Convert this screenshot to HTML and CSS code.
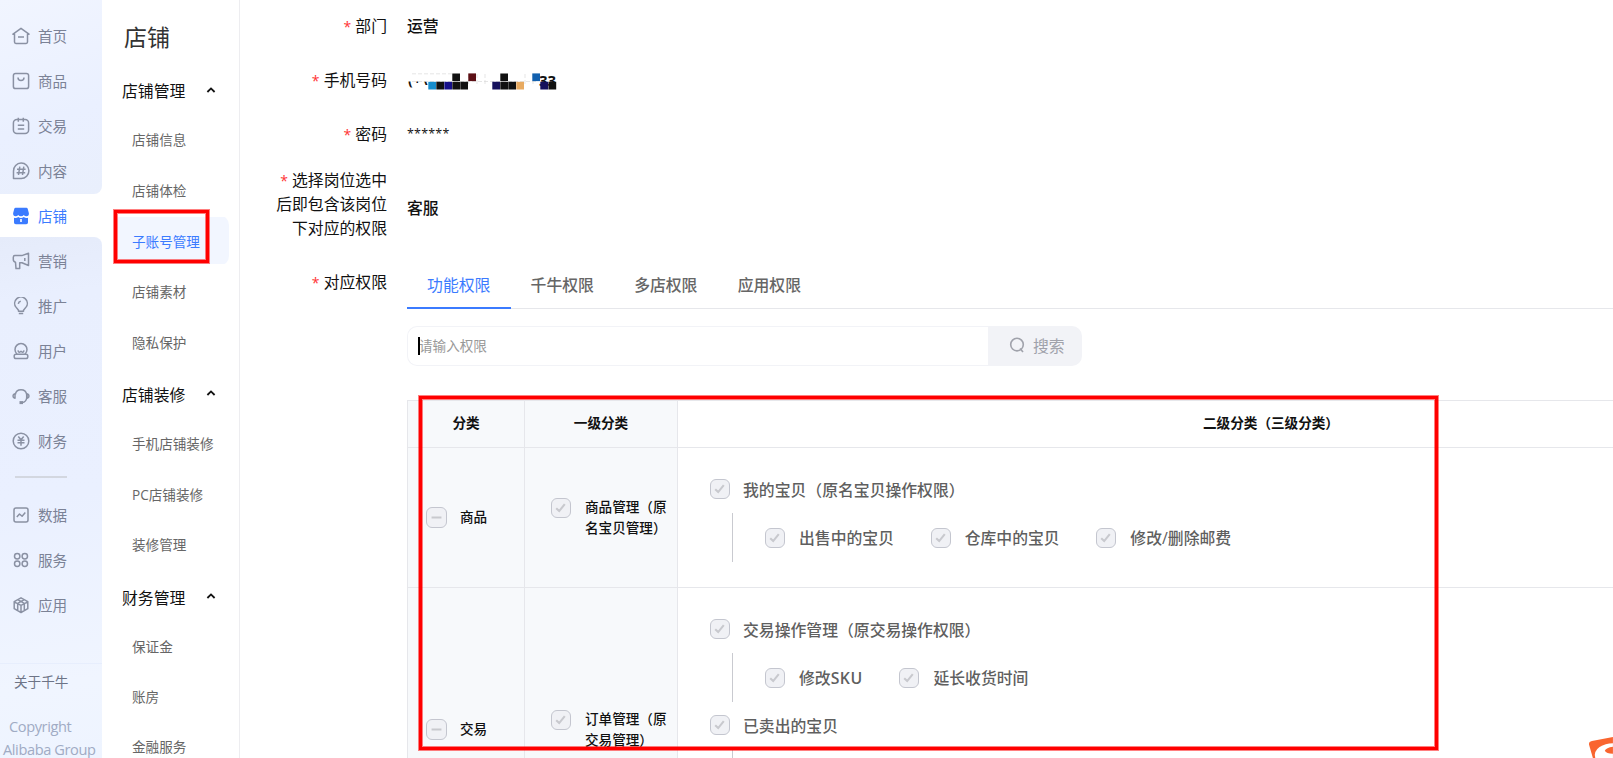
FILE: index.html
```html
<!DOCTYPE html>
<html lang="zh-CN">
<head>
<meta charset="utf-8">
<title>店铺 - 子账号管理</title>
<link rel="stylesheet" href="styles.css">
</head>
<body>
<svg width="0" height="0" class="defs">
  <symbol id="check" viewBox="0 0 20 20"><path d="M4.700 10.200 8 13.400 14.200 5.800" fill="none" stroke="#c8c9ce" stroke-width="2.300"/></symbol>
  <symbol id="minus" viewBox="0 0 20 20"><path d="M4.8 10h10.4" fill="none" stroke="#c8c9ce" stroke-width="2"/></symbol>
  <symbol id="up" viewBox="0 0 10 8"><path d="M1.4 6 5 2.4 8.6 6" fill="none" stroke="#111" stroke-width="1.8"/></symbol>
</svg>
<div class="app">
  <nav class="rail">
    <div class="rail-top">
      <a class="nav"><svg viewBox="0 0 18 18"><path d="M9 1.3 1 7.200h1.500V15q0 1.400 1.400 1.400h10.200q1.400 0 1.400-1.400V7.200H17zM6 10h6"/></svg>首页</a>
      <a class="nav"><svg viewBox="0 0 18 18"><rect x="1.4" y="1.4" width="15.2" height="15.2" rx="2.2"/><path d="M6 5.6q0 3 3 3t3-3"/></svg>商品</a>
      <a class="nav"><svg viewBox="0 0 18 18"><rect x="1.4" y="2.6" width="15.2" height="14" rx="3.5"/><path d="M6.3.8v4M11.3.8v4M5.8 8.2h6.4M5.8 12h6.4"/></svg>交易</a>
      <a class="nav"><svg viewBox="0 0 18 18"><path d="M1.5 16.5V9a7.7 7.7 0 1 1 7.7 7.5zM7.8 4.7 6.5 13M11.8 4.7 10.5 13M5 7.3h8.6M4.6 10.8h8.6"/></svg>内容</a>
    </div>
    <a class="nav on"><svg viewBox="0 0 18 18"><path d="M3.6.7h10.8q1 0 1.3 1l1.2 4.6q.2 3-2.4 3-1.800 0-2.700-1.400Q10.800 9.300 9 9.300T6.200 7.900Q5.300 9.300 3.500 9.300 1 9.300 1.100 6.300L2.300 1.700Q2.600.7 3.600.7zM2 10.700q2.500.7 4.200-.7 2.800 2 5.600 0 1.700 1.400 4.200.7V15.500Q16 17.300 14.200 17.300H3.800Q2 17.300 2 15.500zM8.200 12.100v2.800h1.600v-2.800z"/></svg>店铺</a>
    <div class="rail-bottom">
      <a class="nav"><svg viewBox="0 0 18 18"><path d="M1.300 5.300Q1.300 3.600 3 3.600H9.800L16.500 1.300V13.500L10 10.800H7.700V16.600H4L3.500 10.200Q1.300 9.700 1.300 7.600zM12.800 6v3"/></svg>营销</a>
      <a class="nav"><svg viewBox="0 0 18 18"><path d="M6.500 14.200V13.200L3.800 9.900A6.300 6.300 0 1 1 14.200 9.900L11.500 13.200V14.200zM6.800 16.400h4.400M6.300 6.800q.3-2.300 2.500-2.600"/></svg>推广</a>
      <a class="nav"><svg viewBox="0 0 18 18"><path d="M5 12a6 6 0 1 1 8 0M6 8.400Q6.200 10.300 7.700 10.300L9 9.200 10.300 10.300Q11.800 10.300 12 8.400"/><rect x="2.200" y="12.200" width="13.600" height="4.400" rx="1.800"/></svg>用户</a>
      <a class="nav"><svg viewBox="0 0 18 18"><path d="M3.300 7.500a5.800 5.800 0 0 1 11.400 0v3.500q-.6 4-4.500 4.600"/><path d="M3 6.700q-2 .3-2 2.200T3 11.200zM15 6.700q2 .3 2 2.200t-2 2.300z"/><path d="M7.500 15.600h3.500" stroke-width="3"/></svg>客服</a>
      <a class="nav"><svg viewBox="0 0 18 18"><circle cx="9" cy="9" r="7.800"/><path d="M6.300 4.600 9 7.800l2.700-3.200M5.500 8.200h7M5.500 10.700h7M9 7.800V13.800"/></svg>财务</a>
      <hr class="rule">
      <a class="nav"><svg viewBox="0 0 18 18"><rect x="2" y="2" width="14" height="14" rx="2"/><path d="m4.800 11 2.700-3 2.600 2.200 3.200-3.600"/></svg>数据</a>
      <a class="nav"><svg viewBox="0 0 18 18"><circle cx="5.200" cy="5.200" r="2.700"/><circle cx="12.800" cy="5.200" r="2.700"/><circle cx="5.200" cy="12.800" r="2.700"/><circle cx="12.800" cy="12.800" r="2.700"/></svg>服务</a>
      <a class="nav"><svg viewBox="0 0 18 18"><path d="M9 1.800 15.800 5.600V12.700L9 16.500 2.200 12.700V5.600zM2.200 5.800 9 9.300l6.800-3.500M9 9.300v7.200M5.700 3.700 12.300 7.400V14.500M12.300 3.700 5.700 7.400V14.500"/></svg>应用</a>
      <div class="about">
        <span class="about-link">关于千牛</span>
        <span class="copy c1">Copyright</span>
        <span class="copy c2">Alibaba Group</span>
      </div>
    </div>
  </nav>

  <aside class="sub">
    <h1 class="sub-title">店铺</h1>
    <h2 class="group">店铺管理<svg><use href="#up"/></svg></h2>
    <a class="item">店铺信息</a>
    <a class="item">店铺体检</a>
    <a class="item sel">子账号管理</a>
    <a class="item">店铺素材</a>
    <a class="item">隐私保护</a>
    <h2 class="group">店铺装修<svg><use href="#up"/></svg></h2>
    <a class="item">手机店铺装修</a>
    <a class="item">PC店铺装修</a>
    <a class="item">装修管理</a>
    <h2 class="group">财务管理<svg><use href="#up"/></svg></h2>
    <a class="item">保证金</a>
    <a class="item">账房</a>
    <a class="item last">金融服务</a>
  </aside>

  <main class="main">
    <div class="field f1"><label class="label"><i>*</i> 部门</label><b class="value">运营</b></div>
    <div class="field f2"><label class="label"><i>*</i> 手机号码</label>
      <div class="value phone">
        <span class="ph-a">(+\</span><span class="ph-b">33</span>
        <svg class="mosaic" width="150" height="18" viewBox="0 0 150 18">
          <path d="M0 0h21v8.500H0z" fill="#fff"/>
          <path d="M5 8.500H130M5 .8H45M61.500 1V13M70 1v12M78 1v12M94.500 1v12M118 1v12M126 1v12" stroke="#d4d4d4" stroke-width=".6" stroke-dasharray="4 2" fill="none"/>
          <path d="M45.300 .4h7.700v7.700h-7.700zM93.300.4h7.700v7.700h-7.700zM29.300 8.800H37v7.700h-7.700zM45.300 8.800H53v7.700h-7.700zM53.300 8.800H61v7.700h-7.700zM93.300 8.800h7.700v7.700h-7.700zM101.300 8.800h7.700v7.700h-7.700zM141.500 8.800h7.700v7.700h-7.700z" fill="#111"/>
          <path d="M37.300 8.800H45v7.700h-7.700z" fill="#16108a"/>
          <path d="M85.300 8.800H93v7.700h-7.700zM133.300 8.800h7.900v7.700h-7.900z" fill="#15115c"/>
          <path d="M61.300.4H69v7.700h-7.700z" fill="#5c1015"/>
          <path d="M21.300 8.800H29v7.700h-7.700z" fill="#168dcd"/>
          <path d="M109.300 8.800h7.700v7.700h-7.700z" fill="#e8aa60"/>
          <path d="M125.300.4h7.700v7.700h-7.700z" fill="#1260ae"/>
        </svg>
      </div></div>
    <div class="field f3"><label class="label"><i>*</i> 密码</label><span class="value stars">******</span></div>
    <div class="field f4"><label class="label"><i>*</i> 选择岗位选中<br>后即包含该岗位<br>下对应的权限</label><b class="value">客服</b></div>
    <div class="field f5"><label class="label"><i>*</i> 对应权限</label>
      <div class="panel">
        <div class="tabs">
          <span class="tab active">功能权限</span><span class="tab">千牛权限</span><span class="tab">多店权限</span><span class="tab">应用权限</span>
        </div>
        <div class="search">
          <div class="input"><span class="caret"></span>请输入权限</div>
          <div class="btn"><svg width="16" height="17" viewBox="0 0 16 17"><circle cx="8" cy="7.600" r="6.300" fill="none" stroke="#a0a2ab" stroke-width="1.600"/><path d="m11 11.500 3 3.600" stroke="#a0a2ab" stroke-width="1.600"/></svg>搜索</div>
        </div>
        <div class="table">
          <div class="cell head shade">分类</div>
          <div class="cell head shade">一级分类</div>
          <div class="cell head wide">二级分类（三级分类）</div>

          <div class="cell shade cat"><svg class="box"><use href="#minus"/></svg>商品</div>
          <div class="cell shade lvl1"><svg class="box"><use href="#check"/></svg><span>商品管理（原名宝贝管理）</span></div>
          <div class="cell perms">
            <div class="perm"><svg class="box"><use href="#check"/></svg>我的宝贝（原名宝贝操作权限）</div>
            <div class="children">
              <div class="perm"><svg class="box"><use href="#check"/></svg>出售中的宝贝</div>
              <div class="perm"><svg class="box"><use href="#check"/></svg>仓库中的宝贝</div>
              <div class="perm"><svg class="box"><use href="#check"/></svg>修改/删除邮费</div>
            </div>
          </div>

          <div class="cell shade cat"><svg class="box"><use href="#minus"/></svg>交易</div>
          <div class="cell shade lvl1"><svg class="box"><use href="#check"/></svg><span>订单管理（原交易管理）</span></div>
          <div class="cell perms">
            <div class="perm"><svg class="box"><use href="#check"/></svg>交易操作管理（原交易操作权限）</div>
            <div class="children">
              <div class="perm"><svg class="box"><use href="#check"/></svg><span>修改<b class="latin">SKU</b></span></div>
              <div class="perm"><svg class="box"><use href="#check"/></svg>延长收货时间</div>
            </div>
            <div class="perm second"><svg class="box"><use href="#check"/></svg>已卖出的宝贝</div>
            <div class="children"></div>
          </div>
        </div>
      </div>
    </div>
  </main>

  <div class="mark mark-menu"></div>
  <div class="mark mark-table"></div>
  <svg class="badge" width="24" height="21" viewBox="0 0 25 22"><path d="M0 8Q-.5 5 3 4.300L25 0V22H4z" fill="#f9652f"/><path d="M6.500 22Q4.500 15 11 10.500 17 6.500 25 6.500V22z" fill="#fff"/><path d="M16.500 14.500Q18 11 25 10.200V17.500Q18 17.500 16.500 14.500z" fill="#f9652f"/></svg>
</div>
</body>
</html>
```
FILE: styles.css
```css
* { box-sizing: border-box; }
body {
  margin: 0;
  overflow: hidden;
  background: #fff;
  font-family: "Open Sans", "Noto Sans CJK SC", sans-serif;
  color: #111;
}
.defs { position: absolute; }
.app { position: relative; display: flex; width: 1613px; height: 758px; overflow: hidden; }

/* left rail */
.rail { flex: none; width: 102px; height: 758px; display: flex; flex-direction: column; }
.rail-top { flex: none; height: 194px; padding-top: 13px; background: linear-gradient(160deg, #f1f5ff, #eaf0ff 60%, #e9effc); border-bottom-right-radius: 8px; }
.rail-bottom { flex: 1; min-height: 0; padding-top: 1px; background: linear-gradient(172deg, #e5ebfa, #e9effe 12%, #eaf0ff 50%, #f0f5ff 85%, #eef4ff); border-top-right-radius: 8px; display: flex; flex-direction: column; }
.nav { flex: none; display: flex; align-items: center; height: 45px; padding-left: 12px; font-size: 14.6px; color: #7b8296; white-space: nowrap; }
.nav svg { flex: none; width: 18px; height: 18px; margin-right: 8px; fill: none; stroke: #8a91a3; stroke-width: 1.500; stroke-linejoin: round; }
.nav.on { height: 43px; color: #3b7bff; }
.nav.on svg { fill: #3b7bff; stroke: none; }
.rule { flex: none; width: 52px; height: 2px; margin: 13px 0 14px 15px; border: 0; background: #d3d7e0; }
.about { flex: 1; margin-top: 36px; border-top: 1px solid #e7eefd; display: flex; flex-direction: column; }
.about-link { margin: 7px 0 0 14px; font-size: 13.600px; line-height: 22px; color: #6d7487; }
.copy { line-height: 23px; font-size: 14.600px; color: #a0abc4; white-space: nowrap; letter-spacing: -.4px; }
.c1 { margin: 22px 0 0 9px; }
.c2 { margin-left: 3px; }

/* second-level menu */
.sub { flex: none; width: 138px; border-right: 1px solid #ededf0; }
.sub-title { margin: 0; height: 63.400px; padding: 12px 0 0 22px; font-size: 23px; line-height: 51px; font-weight: 400; color: #333; }
.group { margin: 0; height: 50.600px; padding: 7px 0 0 20px; font-size: 15.840px; line-height: 43.600px; font-weight: 400; display: flex; align-items: center; color: #111; }
.group svg { width: 10px; height: 8px; margin-left: 21px; margin-bottom: 5px; }
.item { display: flex; align-items: center; height: 50.650px; padding-left: 18px; margin: 0 10px 0 12px; font-size: 13.600px; color: #666; white-space: nowrap; }
.item.sel { color: #3b7bff; background: linear-gradient(#f2f6ff, #f2f6ff) center / 100% 47px no-repeat; border-radius: 10px; }
.item.last { height: 34px; padding-top: 16px; line-height: 18px; }

/* form */
.main { flex: none; width: 1373px; padding-top: 0; font-size: 15.840px; }
.field { display: flex; }
.label { flex: none; width: 147px; margin-right: 20px; text-align: right; line-height: 24px; white-space: nowrap; }
.label i { color: #f33; font-style: normal; font-size: 14px; line-height: 0; }
.value { line-height: 24px; font-weight: 500; }
.f1 { margin-top: 14px; }
.f2, .f3 { margin-top: 30px; }
.f4 { margin-top: 22px; align-items: center; }
.f4 .value { padding-top: 8px; }
.f5 { margin-top: 30px; align-items: flex-start; }
.stars { font-weight: 400; font-size: 12.500px; letter-spacing: .2px; }
.phone { position: relative; width: 150px; height: 24px; font-weight: 700; }
.ph-a, .ph-b { position: absolute; line-height: 24px; }
.ph-a { left: 1px; top: 0; font-size: 14px; letter-spacing: .500px; }
.ph-b { left: 132px; top: 0; font-size: 15px; }
.mosaic { position: absolute; left: 0; top: 5px; }

.panel { width: 1206px; margin-top: -5px; }
.tabs { display: flex; height: 44px; border-bottom: 1px solid #e6e7eb; }
.tab { height: 44px; padding: 0 20.100px; line-height: 40px; color: #666; font-weight: 500; }
.tab.active { color: #3b7bff; font-weight: 400; border-bottom: 2px solid #3b7bff; }
.search { display: flex; height: 40px; margin-top: 17px; }
.input { position: relative; width: 581px; padding-left: 11px; line-height: 37px; font-size: 13.600px; color: #999; border: 1px solid #f2f3f7; border-right: 0; border-radius: 10px 0 0 10px; }
.caret { position: absolute; left: 10px; top: 10px; width: 2px; height: 18px; background: #000; }
.btn { display: flex; align-items: center; width: 94px; padding: 0 0 1px 21px; gap: 8px; background: #f2f3f7; color: #a0a2ab; border-radius: 0 10px 10px 0; }

/* permission table */
.table { display: grid; grid-template-columns: 117px 153px 1180px; grid-template-rows: 47px 140px 284px; margin-top: 34px; width: 1451px; border: solid #e6e7eb; border-width: 1px 0 0 1px; font-size: 13.600px; font-weight: 500; }
.cell { border: solid #e6e7eb; border-width: 0 1px 1px 0; }
.shade { background: #f7f9fb; }
.head { display: flex; align-items: center; justify-content: center; padding-bottom: 5px; font-weight: 700; }
.wide { padding-left: 7px; }
.box { flex: none; width: 20px; height: 20px; border: 1px solid #c4c6cf; border-radius: 6px; background: #f0f1f5; }
.cat { display: flex; align-items: center; gap: 13px; padding: 0 0 3px 18px; }
.cat .box { width: 21px; height: 21px; margin-top: 2px; }
.lvl1 { display: flex; align-items: center; gap: 14px; padding-left: 26px; line-height: 20.400px; }
.lvl1 span { width: 84px; }
.lvl1 .box { margin-bottom: 20px; }
.perms { padding: 29px 0 0 32px; font-size: 15.840px; font-weight: 500; color: #5f5f5f; }
.perm { display: flex; align-items: center; gap: 13px; height: 24px; white-space: nowrap; }
.children { display: flex; align-items: center; gap: 36.700px; height: 49px; margin: 12px 0 0 22px; padding-left: 32px; border-left: 1px solid #c9cad0; }
.children .perm { gap: 14px; }
.latin { font-weight: 600; letter-spacing: .5px; }
.second { margin-top: 11px; }

/* overlays */
.mark { position: absolute; border: 3px solid #f00; box-shadow: 0 0 0 1px rgba(255,0,0,.5), inset 0 0 0 1px rgba(255,0,0,.5); }
.mark-menu { left: 114px; top: 210px; width: 95px; height: 53px; }
.mark-table { left: 419px; top: 396px; width: 1019px; height: 354px; }
.badge { position: absolute; right: 0; bottom: 0; }
```
